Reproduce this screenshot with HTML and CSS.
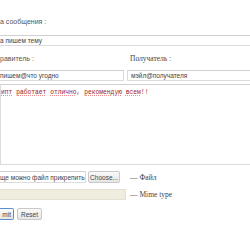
FILE: index.html
```html
<!DOCTYPE html>
<html>
<head>
<meta charset="utf-8">
<link rel="stylesheet" href="styles.css">
</head>
<body>
<form class="form">
  <div class="label sans">а сообщения :</div>
  <div class="field cut wide"><span class="val">а пишем тему</span></div>
  <div class="pair">
    <div class="col left">
      <div class="label sans">равитель :</div>
      <div class="field cut"><span class="val">пишем@что угодно</span></div>
    </div>
    <div class="col right">
      <div class="label serif">Получатель :</div>
      <div class="field"><span class="val">мэйл@получателя</span></div>
    </div>
  </div>
  <div class="area cut"><span class="msg">ипт</span> <span class="msg">работает</span> <span class="msg">отлично,</span> <span class="msg">рекомендую</span> <span class="msg">всем</span>!!</div>
  <div class="line">
    <div class="field cut file"><span class="val">ще можно файл прикрепить</span></div>
    <span class="btn choose">Choose...</span>
    <span class="note serif">— Файл</span>
  </div>
  <div class="line mime-line">
    <div class="field cut mime"></div>
    <span class="note serif note-mime">— Mime type</span>
  </div>
  <div class="buttons">
    <span class="btn cutbtn submit">mit</span>
    <span class="btn reset">Reset</span>
  </div>
</form>
</body>
</html>
```
FILE: styles.css
```css
html, body { margin: 0; padding: 0; background: #fff; }
body { width: 250px; height: 250px; overflow: hidden; }
.form {
  width: 250px;
  padding-top: 17px;
  display: flex;
  flex-direction: column;
}
.label { font-size: 7px; line-height: 10px; color: #555; height: 10px; white-space: nowrap; }
.sans { font-family: "Liberation Sans", Arial, sans-serif; }
.serif { font-family: "Liberation Serif", "Times New Roman", serif; color: #444; font-size: 7.5px; }
.field {
  box-sizing: border-box;
  height: 11px;
  border: 1px solid #dcdcdc;
  border-top-color: #d0d0d0;
  background: #fff;
  display: flex;
  align-items: center;
  padding-left: 3px;
}
.cut { border-left: 0; padding-left: 0; }
.val { font-family: "Liberation Sans", Arial, sans-serif; font-size: 6.5px; color: #444; white-space: nowrap; }
.wide { margin-top: 8px; width: 250px; border-right: 0; }
.pair { display: flex; margin-top: 8px; gap: 3px; }
.col { display: flex; flex-direction: column; gap: 6px; }
.col.left { width: 124px; }
.col.left .field { width: 124px; }
.col.right { flex: 1; }
.col.right .label { padding-left: 3px; }
.col.right .field { width: 123px; border-right: 0; }
.area {
  box-sizing: border-box;
  margin-top: 3px;
  height: 81px;
  width: 250px;
  border: 1px solid #dcdcdc;
  border-top-color: #d0d0d0;
  border-right: 0;
  padding-top: 4px;
  font-family: "Liberation Mono", "Courier New", monospace;
  font-size: 6.3px;
  line-height: 8px;
  color: #9a1c1c;
  white-space: nowrap;
}
.msg {
  text-decoration: underline dotted #f08a8a;
  text-decoration-thickness: 1px;
  text-underline-offset: 1px;
}
.line { display: flex; align-items: center; margin-top: 6px; height: 12px; }
.mime-line { height: 11px; }
.file { width: 86px; height: 12px; }
.btn {
  box-sizing: border-box;
  height: 12px;
  display: inline-flex;
  align-items: center;
  justify-content: center;
  padding: 0 3px;
  font-family: "Liberation Sans", Arial, sans-serif;
  font-size: 6.5px;
  color: #444;
  border: 1px solid #c8c8c8;
  border-radius: 2px;
  background: linear-gradient(#fafafa, #e6e6e6);
  white-space: nowrap;
}
.choose { margin-left: 2px; width: 32px; }
.note { margin-left: 10px; }
.note-mime { margin-left: 4px; }
.mime { width: 126px; height: 11px; background: #efeddf; border-color: #e4e1cf; }
.buttons { display: flex; gap: 3px; margin-top: 8px; }
.cutbtn { border-left: 0; border-top-left-radius: 0; border-bottom-left-radius: 0; }
.submit { border-color: #5b8fd0; width: 14px; justify-content: flex-end; padding: 0 2px 0 0; }
.reset { width: 25px; }
```
